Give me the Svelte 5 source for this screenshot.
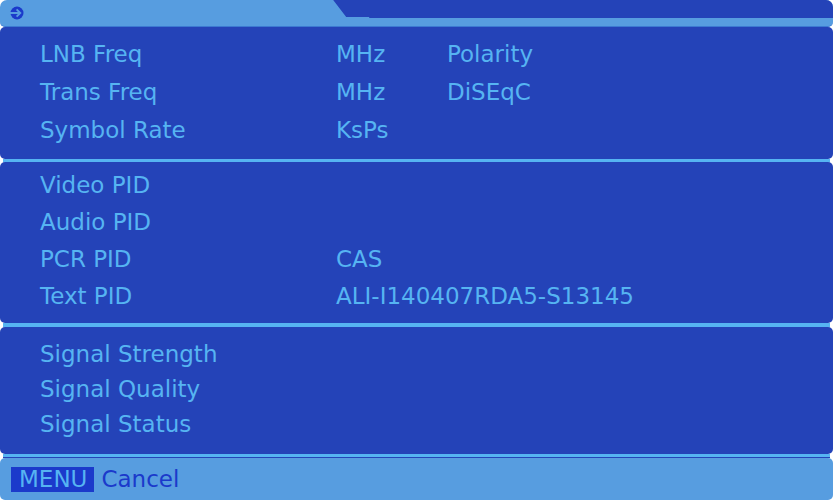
<script>
  const sections = [
    {
      name: 'tuner',
      rows: [
        ['LNB Freq', 'MHz', 'Polarity'],
        ['Trans Freq', 'MHz', 'DiSEqC'],
        ['Symbol Rate', 'KsPs', '']
      ]
    },
    {
      name: 'pids',
      rows: [
        ['Video PID', '', ''],
        ['Audio PID', '', ''],
        ['PCR PID', 'CAS', ''],
        ['Text PID', 'ALI-I140407RDA5-S13145', '']
      ]
    },
    {
      name: 'signal',
      rows: [
        ['Signal Strength', '', ''],
        ['Signal Quality', '', ''],
        ['Signal Status', '', '']
      ]
    }
  ];
</script>

<main>
  <header>
    <div class="tab">
      <svg width="14" height="14" viewBox="0 0 14 14" aria-hidden="true">
        <circle cx="7" cy="7" r="6.5" fill="#1b3acb" />
        <path d="M0 7H10M6.6 3.3L10.3 7L6.6 10.7" fill="none" stroke="#579de0" stroke-width="1.9" />
      </svg>
    </div>
    <div class="strip"></div>
  </header>

  {#each sections as section}
    <section class={section.name}>
      {#each section.rows as row}
        <div class="row">
          {#each row as cell}
            <span>{cell}</span>
          {/each}
        </div>
      {/each}
    </section>
    <div class="rule {section.name}-rule"></div>
  {/each}

  <footer>
    <button type="button"><kbd>MENU</kbd>Cancel</button>
  </footer>
</main>

<style>
  :global(body) {
    margin: 0;
    background: #fff;
  }

  main {
    font: 23px/28px 'DejaVu Sans', sans-serif;
    color: #56b4f2;
  }

  header {
    display: flex;
    height: 27px;
    background: #579de0;
    border-radius: 7px 7px 5px 5px;
    border-bottom: 1px solid #3c7ad2;
    box-sizing: border-box;
    overflow: hidden;
  }

  .tab {
    width: 40%;
    display: flex;
    align-items: center;
    padding-left: 10px;
    box-sizing: border-box;
  }

  .strip {
    flex: 1;
    height: 18px;
    background: #2443b8;
    clip-path: polygon(0 0, 100% 0, 100% 100%, 36px 100%, 36px 17px, 13px 17px);
  }

  section {
    background: #2443b8;
    border-radius: 5px;
    padding-left: 40px;
  }

  .row {
    display: grid;
    grid-template-columns: 296px 111px 1fr;
    align-items: center;
    white-space: nowrap;
  }

  .tuner {
    padding-top: 8px;
    padding-bottom: 10px;
  }

  .tuner .row {
    height: 38px;
  }

  .pids {
    padding-top: 4px;
    padding-bottom: 9px;
  }

  .pids .row {
    height: 37px;
  }

  .signal {
    padding-top: 9px;
    padding-bottom: 13px;
  }

  .signal .row {
    height: 35px;
  }

  .rule {
    height: 3px;
    margin: 0 3px;
    background: #56b4f2;
  }

  .pids-rule {
    height: 4px;
  }

  .signal-rule {
    border-bottom: 1px solid #2443b8;
  }

  footer {
    display: flex;
    align-items: center;
    height: 42px;
    padding-left: 11px;
    background: #579de0;
    border-radius: 5px;
  }

  button {
    display: flex;
    align-items: center;
    gap: 7px;
    padding: 0;
    border: 0;
    background: none;
    font: inherit;
    color: #1b3acb;
    cursor: pointer;
  }

  kbd {
    padding: 0 7px 0 8px;
    font: inherit;
    line-height: 25px;
    background: #1b3acb;
    color: #56b4f2;
  }
</style>
